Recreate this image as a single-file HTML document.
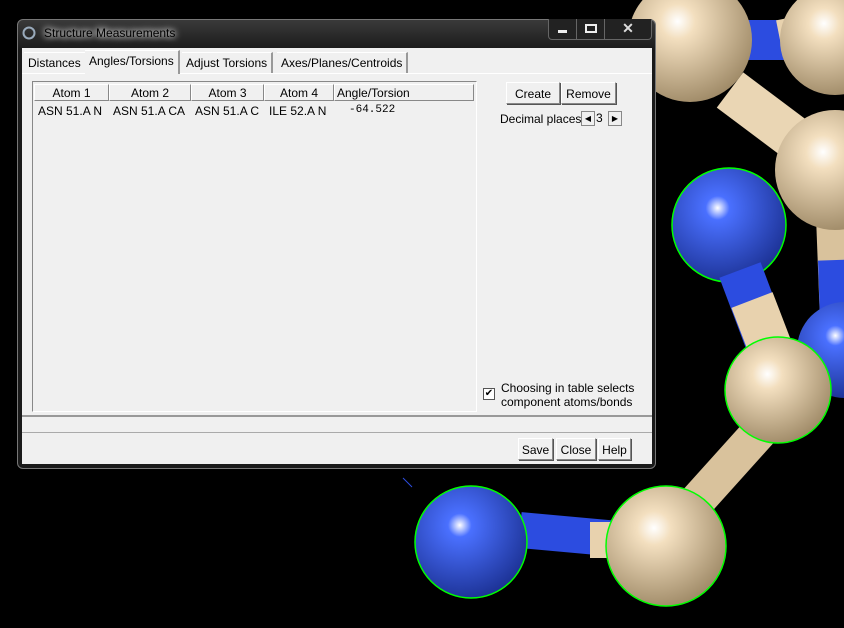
<!DOCTYPE html>
<html><head><style>
body{margin:0;width:844px;height:628px;background:#000;overflow:hidden;position:relative;font-family:"Liberation Sans",sans-serif;font-size:12px;color:#000}
svg.bg{position:absolute;left:0;top:0}
.win{position:absolute;left:17px;top:19px;width:639px;height:450px;border:1px solid #777;border-radius:6px;background:linear-gradient(#3a3a3a,#1a1a1a 30px);box-sizing:border-box}
.title{position:absolute;left:44px;top:26px;color:#000;font-size:12px;text-shadow:0 0 8px #fff,0 0 6px #fff}
.ctl{position:absolute;top:19px;height:20px;border:1px solid #666;border-top:none;background:#222}
.client{position:absolute;left:22px;top:48px;width:630px;height:416px;background:#f0f0f0}
.tab{position:absolute;top:4px;height:20px;line-height:20px;padding:0 4px;border-right:2px solid #999;border-top:1px solid #fff;background:#f0f0f0}
.btn{position:absolute;height:22px;line-height:22px;text-align:center;background:#f0f0f0;border:1px solid #fff;border-right-color:#888;border-bottom-color:#888;box-shadow:1px 1px 0 #555;box-sizing:border-box}
.th{position:absolute;top:36px;height:17px;line-height:17px;text-align:center;border:1px solid #fff;border-right-color:#888;border-bottom-color:#888;box-sizing:border-box}
.td{position:absolute;top:56px}
</style></head><body>
<svg class="bg" width="844" height="628">
<defs>
<radialGradient id="t" cx="0.4" cy="0.35" r="0.7"><stop offset="0" stop-color="#fff"/><stop offset="0.2" stop-color="#f3dfbf"/><stop offset="1" stop-color="#9c8764"/></radialGradient>
<radialGradient id="b" cx="0.4" cy="0.35" r="0.7"><stop offset="0" stop-color="#fff"/><stop offset="0.15" stop-color="#4a70ff"/><stop offset="1" stop-color="#1a2f90"/></radialGradient>
</defs>
<line x1="520" y1="530" x2="630" y2="540" stroke="#2c4ce0" stroke-width="36"/>
<line x1="590" y1="540" x2="640" y2="540" stroke="#e8d2ae" stroke-width="36"/>
<line x1="680" y1="520" x2="770" y2="420" stroke="#d9c29c" stroke-width="36"/>
<line x1="835" y1="190" x2="840" y2="320" stroke="#d9c29c" stroke-width="40"/>
<line x1="838" y1="260" x2="840" y2="320" stroke="#2c4ce0" stroke-width="40"/>
<line x1="745" y1="40" x2="820" y2="40" stroke="#2c4ce0" stroke-width="40"/>
<line x1="780" y1="40" x2="830" y2="30" stroke="#e8d2ae" stroke-width="40"/>
<circle cx="835" cy="40" r="55" fill="url(#t)"/>
<circle cx="690" cy="40" r="62" fill="url(#t)"/>
<line x1="730" y1="90" x2="810" y2="150" stroke="#ead6b4" stroke-width="44"/>
<circle cx="835" cy="170" r="60" fill="url(#t)"/>
<circle cx="729" cy="225" r="57" fill="url(#b)" stroke="#0f0" stroke-width="1.5"/>
<line x1="740" y1="270" x2="770" y2="350" stroke="#2c4ce0" stroke-width="44"/>
<line x1="752" y1="300" x2="775" y2="360" stroke="#e8d2ae" stroke-width="44"/>
<circle cx="845" cy="350" r="48" fill="url(#b)"/>
<circle cx="778" cy="390" r="53" fill="url(#t)" stroke="#0f0" stroke-width="1.5"/>
<circle cx="666" cy="546" r="60" fill="url(#t)" stroke="#0f0" stroke-width="1.5"/>
<circle cx="471" cy="542" r="56" fill="url(#b)" stroke="#0f0" stroke-width="1.5"/>
<line x1="403" y1="478" x2="412" y2="487" stroke="#2c4ce0"/>
</svg>
<div class="win"></div>
<svg style="position:absolute;left:22px;top:26px" width="14" height="14"><circle cx="7" cy="7" r="5.5" fill="none" stroke="#9ab" stroke-width="2"/></svg>
<div class="title">Structure Measurements</div>
<div class="ctl" style="left:548px;width:27px;border-left:1px solid #666;border-radius:0 0 0 4px"><div style="position:absolute;left:9px;top:11px;width:9px;height:3px;background:#eee"></div></div>
<div class="ctl" style="left:576px;width:27px"><div style="position:absolute;left:8px;top:5px;width:8px;height:5px;border:2px solid #eee"></div></div>
<div class="ctl" style="left:604px;width:46px;border-radius:0 0 4px 0;color:#ddd;text-align:center;font-weight:bold;font-size:14px;line-height:18px">✕</div>
<div class="client">
<div style="position:absolute;left:0;top:25px;width:630px;border-top:1px solid #fff"></div>
<div class="tab" style="left:2px">Distances</div>
<div class="tab" style="left:63px;top:2px;height:23px;background:#f0f0f0">Angles/Torsions</div>
<div class="tab" style="left:160px">Adjust Torsions</div>
<div class="tab" style="left:255px">Axes/Planes/Centroids</div>
<div style="position:absolute;left:10px;top:33px;width:443px;height:329px;border:1px solid #888;border-right-color:#fff;border-bottom-color:#fff;background:#f0f0f0"></div>
<div class="th" style="left:12px;width:75px">Atom 1</div>
<div class="th" style="left:87px;width:82px">Atom 2</div>
<div class="th" style="left:169px;width:73px">Atom 3</div>
<div class="th" style="left:242px;width:70px">Atom 4</div>
<div class="th" style="left:312px;width:140px;text-align:left;padding-left:2px">Angle/Torsion</div>
<div class="td" style="left:16px">ASN 51.A N</div>
<div class="td" style="left:91px">ASN 51.A CA</div>
<div class="td" style="left:173px">ASN 51.A C</div>
<div class="td" style="left:247px">ILE 52.A N</div>
<div class="td" style="left:327px;font-family:'Liberation Mono',monospace;font-size:11px">-64.522</div>
<div class="btn" style="left:484px;top:34px;width:54px">Create</div>
<div class="btn" style="left:539px;top:34px;width:55px">Remove</div>
<div style="position:absolute;left:478px;top:64px">Decimal places</div>
<div style="position:absolute;left:559px;top:63px;width:12px;height:13px;border:1px solid #888;font-size:8px;text-align:center;line-height:13px">◀</div>
<div style="position:absolute;left:574px;top:63px">3</div>
<div style="position:absolute;left:586px;top:63px;width:12px;height:13px;border:1px solid #888;font-size:8px;text-align:center;line-height:13px">▶</div>
<div style="position:absolute;left:461px;top:340px;width:10px;height:10px;border:1px solid #555;background:#fff;font-size:10px;line-height:10px;text-align:center">✔</div>
<div style="position:absolute;left:479px;top:333px;line-height:14px">Choosing in table selects<br>component atoms/bonds</div>
<div style="position:absolute;left:0;top:367px;width:630px;border-top:2px solid #999"></div>
<div style="position:absolute;left:0;top:384px;width:630px;border-top:1px solid #aaa"></div>
<div class="btn" style="left:496px;top:390px;width:35px">Save</div>
<div class="btn" style="left:534px;top:390px;width:40px">Close</div>
<div class="btn" style="left:576px;top:390px;width:33px">Help</div>
</div>
</body></html>
